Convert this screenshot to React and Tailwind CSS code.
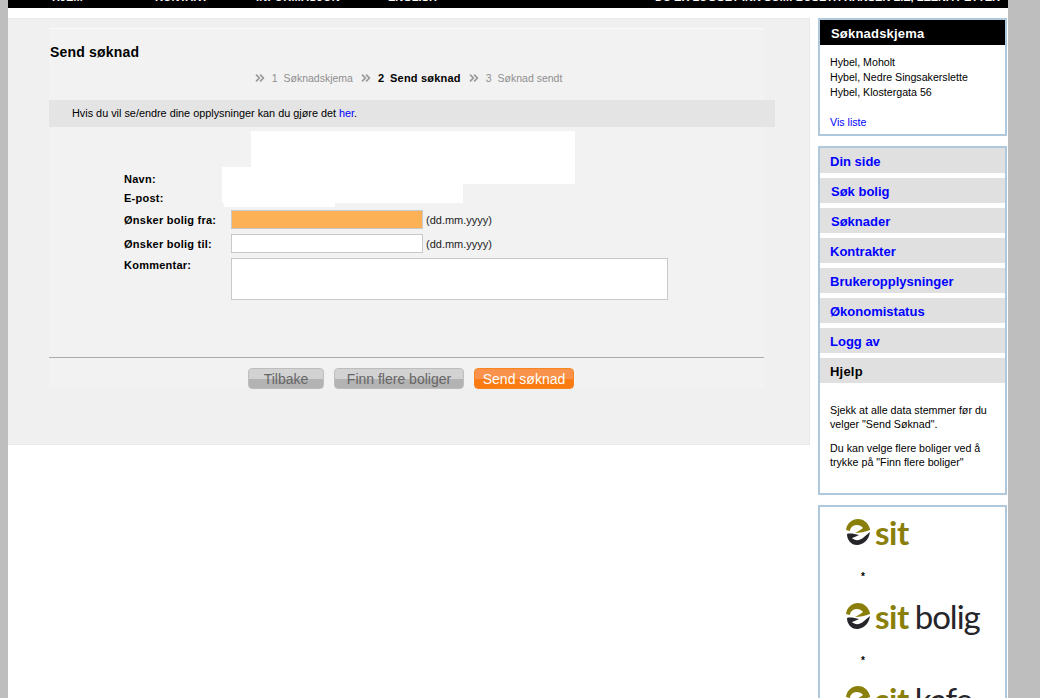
import React from 'react';
import { ChevronsRight } from 'lucide-react';

const navLinks = [
  { label: 'HJEM', className: 'w-[103px]' },
  { label: 'KONTAKT', className: 'w-[101px]' },
  { label: 'INFORMASJON', className: 'w-[132px] tracking-[0.25px]' },
  { label: 'ENGLISH', className: '' },
];

const menuItems = [
  { label: 'Din side', className: 'pl-[10px]' },
  { label: 'Søk bolig', className: 'pl-[11px]' },
  { label: 'Søknader', className: 'pl-[11px]' },
  { label: 'Kontrakter', className: 'pl-[10px]' },
  { label: 'Brukeropplysninger', className: 'pl-[10px]' },
  { label: 'Økonomistatus', className: 'pl-[10px]' },
  { label: 'Logg av', className: 'pl-[10px]' },
];

const Emblem = () => (
  <svg width="25" height="26" viewBox="0 0 25 26" className="shrink-0">
    <path fill="#8a7f0a" d="M0 11C1 4 6 0 12 0c5 0 10 3 12 10l0 1c-5 2-10 3-15 3 3-2 6-3 8-5-2-3-7-4-10-2-2 1-3 3-3 5z" />
    <path fill="#25252a" d="M1 15c3-1 8 0 12 1-2 1-4 2-7 3 3 3 8 3 12-1l6-5c-1 8-7 13-13 13C5 26 1 21 1 15z" />
  </svg>
);

const SitLogo = ({ suffix }) => (
  <div className="flex items-center gap-[4px] h-[26px]">
    <Emblem />
    <span className="font-['Lato',sans-serif] font-bold text-[33px] leading-[26px] text-[#8a7f0a] tracking-[-0.5px]">sit</span>
    {suffix && (
      <span className="ml-[2px] font-['Lato',sans-serif] text-[33px] leading-[26px] text-[#25252a] tracking-[-1px]">{suffix}</span>
    )}
  </div>
);

const Step = ({ number, label, active }) => (
  <div className={active ? 'flex items-center text-black font-bold text-[11px]' : 'flex items-center text-[#8f8f8f]'}>
    <ChevronsRight size={14} strokeWidth={3} className="text-[#999999]" />
    <span className="ml-[5px] mr-[6px]">{number}</span>
    <span className={active ? 'tracking-[0.2px]' : ''}>{label}</span>
  </div>
);

const FormLabel = ({ children, className = '' }) => (
  <div className={`w-[107px] shrink-0 font-bold text-[11px] tracking-[0.25px] text-black ${className}`}>{children}</div>
);

const App = () => {
  return (
    <div className="h-screen overflow-hidden bg-[#bebebe] font-['Liberation_Sans',Arial,sans-serif]">
      <div className="relative ml-2 w-[1000px] h-full bg-white">
        {/* toppmeny, det meste av teksten er scrollet ut av bildet */}
        <div className="h-2 bg-black overflow-hidden">
          <div className="-mt-[8px] flex justify-between pl-[44px] pr-[8px] text-white font-bold text-[11px] leading-[11px]">
            <div className="flex">
              {navLinks.map((link) => (
                <span key={link.label} className={link.className}>{link.label}</span>
              ))}
            </div>
            <span>DU ER LOGGET INN SOM: BUSETH HANSEN LIE, LEENA PETTER</span>
          </div>
        </div>

        <div className="flex pt-[10px]">
          {/* hovedpanel */}
          <div className="w-[802px] h-[427px] shrink-0 bg-[#f0f0f0] border border-[#e9e9e9] border-l-0 pt-[9px] pl-[41px]">
            <div className="w-[715px] h-[361px] bg-[#f2f2f2] border-t border-[#fafafa]">
              <h1 className="pt-[13px] pl-[1px] font-bold text-[14px] leading-[20px] tracking-[0.2px] text-black">Send søknad</h1>
              <div className="mt-[9px] flex justify-center gap-[6px] text-[10.5px] leading-[14px] pl-[2px]">
                <Step number="1" label="Søknadskjema" />
                <Step number="2" label="Send søknad" active />
                <Step number="3" label="Søknad sendt" />
              </div>
              <div className="mt-[15px] w-[726px] h-[27px] bg-[#e4e4e4] pl-[23px] flex items-center text-[10.85px] text-black">
                <span>Hvis du vil se/endre dine opplysninger kan du gjøre det <a href="#" className="text-[#0000ff]">her</a>.</span>
              </div>

              <div className="pl-[75px] pt-[45px]">
                <div className="h-[14px] leading-[14px] flex items-center"><FormLabel>Navn:</FormLabel></div>
                <div className="mt-[5px] h-[14px] leading-[14px] flex items-center"><FormLabel>E-post:</FormLabel></div>
                <div className="mt-[5px] flex items-center">
                  <FormLabel className="pt-[2px]">Ønsker bolig fra:</FormLabel>
                  <div className="w-[192px] h-[19px] bg-[#fdb156] border border-[#c9c9c9]" />
                  <span className="ml-[3px] pt-[2px] text-[11px] text-[#222222]">(dd.mm.yyyy)</span>
                </div>
                <div className="mt-[5px] flex items-center">
                  <FormLabel className="pt-[2px]">Ønsker bolig til:</FormLabel>
                  <div className="w-[192px] h-[19px] bg-white border border-[#c9c9c9]" />
                  <span className="ml-[3px] pt-[2px] text-[11px] text-[#222222]">(dd.mm.yyyy)</span>
                </div>
                <div className="mt-[5px] flex items-start">
                  <FormLabel className="-mt-[1px]">Kommentar:</FormLabel>
                  <div className="w-[437px] h-[42px] bg-white border border-[#c9c9c9]" />
                </div>
              </div>

              <div className="mt-[57px] border-t border-[#aaaaaa]" />
              <div className="mt-[10px] flex gap-[10px] pl-[199px] text-[14px]">
                <button className="w-[76px] h-[21px] pb-[2px] rounded-[4px] bg-[linear-gradient(#d2d2d2_50%,#b3b3b3_50%)] border border-[#bdbdbd] text-[#666666]">Tilbake</button>
                <button className="w-[130px] h-[21px] pb-[2px] rounded-[4px] bg-[linear-gradient(#d2d2d2_50%,#b3b3b3_50%)] border border-[#bdbdbd] text-[#666666]">Finn flere boliger</button>
                <button className="w-[100px] h-[21px] pb-[2px] rounded-[4px] bg-[linear-gradient(#f9924a_50%,#f97b12_50%)] border border-[#f98420] text-white">Send søknad</button>
              </div>
            </div>
          </div>

          {/* høyre kolonne */}
          <div className="ml-2 w-[189px] shrink-0 flex flex-col gap-[10px]">
            <div className="h-[118px] border-[2px] border-[#b0c8dc]">
              <div className="h-[25px] bg-black pl-[11px] pt-[2px] flex items-center font-bold text-[13px] tracking-[0.2px] text-white">Søknadskjema</div>
              <div className="pl-[10px] pt-[10px] text-[10.65px] leading-[15px] text-black">
                <p>Hybel, Moholt</p>
                <p>Hybel, Nedre Singsakerslette</p>
                <p>Hybel, Klostergata 56</p>
                <a href="#" className="block mt-[15px] text-[#0000ff]">Vis liste</a>
              </div>
            </div>

            <div className="h-[349px] border-[2px] border-[#b0c8dc] flex flex-col gap-[5px]">
              {menuItems.map((item) => (
                <a key={item.label} href="#" className={`h-[25px] shrink-0 bg-[#e0e0e0] pt-[2px] flex items-center font-bold text-[13px] text-[#0000ff] ${item.className}`}>
                  {item.label}
                </a>
              ))}
              <div className="h-[25px] shrink-0 bg-[#e0e0e0] pl-[10px] pt-[2px] flex items-center font-bold text-[13px] tracking-[0.2px] text-black">Hjelp</div>
              <div className="pl-[10px] pt-[15px] text-[10.7px] leading-[14px] text-black">
                <p>Sjekk at alle data stemmer før du velger "Send Søknad".</p>
                <p className="mt-[10px]">Du kan velge flere boliger ved å trykke på "Finn flere boliger"</p>
              </div>
            </div>

            <div className="h-[300px] border-[2px] border-[#b0c8dc] pl-[26px] pt-[12px]">
              <SitLogo />
              <div className="mt-[27px] pl-[15px] font-bold text-[10px] leading-[10px] text-black">*</div>
              <div className="mt-[21px]"><SitLogo suffix="bolig" /></div>
              <div className="mt-[27px] pl-[15px] font-bold text-[10px] leading-[10px] text-black">*</div>
              <div className="mt-[20px]"><SitLogo suffix="kafe" /></div>
            </div>
          </div>
        </div>

        {/* hvite felt over skjemaet, der personopplysningene er skjult */}
        <div className="absolute left-[243px] top-[131px] w-[324px] h-[53px] bg-white" />
        <div className="absolute left-[214px] top-[167px] w-[241px] h-[36px] bg-white" />
        <div className="absolute left-[216px] top-[203px] w-[111px] h-[4px] bg-white" />
      </div>
    </div>
  );
};

export default App;
